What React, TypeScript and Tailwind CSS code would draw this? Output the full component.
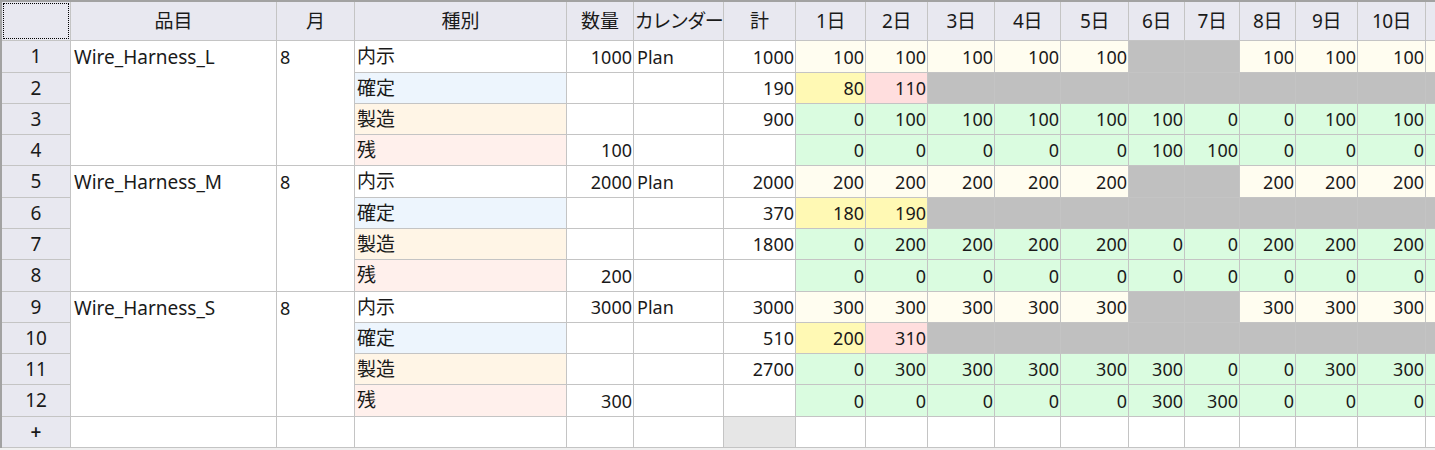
import React from "react";

type Kind = "naiji" | "kakutei" | "seizo" | "zan";

const GRAY = "bg-[#c0c0c0]";
const CREAM = "bg-[#fffdf0]";
const GREEN = "bg-[#dafce0]";
const YELLOW = "bg-[#fff9b4]";
const PINK = "bg-[#ffdede]";

const kindLabel: Record<Kind, string> = {
  naiji: "内示",
  kakutei: "確定",
  seizo: "製造",
  zan: "残",
};
const kindBg: Record<Kind, string> = {
  naiji: "bg-white",
  kakutei: "bg-[#edf5fd]",
  seizo: "bg-[#fff5e6]",
  zan: "bg-[#fff0ec]",
};

type DayCell = { v: string; bg: string };

type Row = {
  no: number;
  kind: Kind;
  qty: string;
  cal: string;
  total: string;
  days: DayCell[];
};

type Product = { name: string; month: string; rows: Row[] };

// the 11th day column is only a sliver at the right edge: colour only, no text
const naijiDays = (v: number): DayCell[] =>
  [v, v, v, v, v, null, null, v, v, v, -1].map((x) =>
    x === null ? { v: "", bg: GRAY } : { v: x < 0 ? "" : String(x), bg: CREAM }
  );

const kakuteiDays = (a: number, b: number, bYellow: boolean): DayCell[] => [
  { v: String(a), bg: YELLOW },
  { v: String(b), bg: bYellow ? YELLOW : PINK },
  ...Array.from({ length: 9 }, () => ({ v: "", bg: GRAY })),
];

const greenDays = (vals: number[]): DayCell[] => [
  ...vals.map((x) => ({ v: String(x), bg: GREEN })),
  { v: "", bg: GREEN },
];

const products: Product[] = [
  {
    name: "Wire_Harness_L",
    month: "8",
    rows: [
      { no: 1, kind: "naiji", qty: "1000", cal: "Plan", total: "1000", days: naijiDays(100) },
      { no: 2, kind: "kakutei", qty: "", cal: "", total: "190", days: kakuteiDays(80, 110, false) },
      { no: 3, kind: "seizo", qty: "", cal: "", total: "900", days: greenDays([0, 100, 100, 100, 100, 100, 0, 0, 100, 100]) },
      { no: 4, kind: "zan", qty: "100", cal: "", total: "", days: greenDays([0, 0, 0, 0, 0, 100, 100, 0, 0, 0]) },
    ],
  },
  {
    name: "Wire_Harness_M",
    month: "8",
    rows: [
      { no: 5, kind: "naiji", qty: "2000", cal: "Plan", total: "2000", days: naijiDays(200) },
      { no: 6, kind: "kakutei", qty: "", cal: "", total: "370", days: kakuteiDays(180, 190, true) },
      { no: 7, kind: "seizo", qty: "", cal: "", total: "1800", days: greenDays([0, 200, 200, 200, 200, 0, 0, 200, 200, 200]) },
      { no: 8, kind: "zan", qty: "200", cal: "", total: "", days: greenDays([0, 0, 0, 0, 0, 0, 0, 0, 0, 0]) },
    ],
  },
  {
    name: "Wire_Harness_S",
    month: "8",
    rows: [
      { no: 9, kind: "naiji", qty: "3000", cal: "Plan", total: "3000", days: naijiDays(300) },
      { no: 10, kind: "kakutei", qty: "", cal: "", total: "510", days: kakuteiDays(200, 310, false) },
      { no: 11, kind: "seizo", qty: "", cal: "", total: "2700", days: greenDays([0, 300, 300, 300, 300, 300, 0, 0, 300, 300]) },
      { no: 12, kind: "zan", qty: "300", cal: "", total: "", days: greenDays([0, 0, 0, 0, 0, 300, 300, 0, 0, 0]) },
    ],
  },
];

const dayHeaders = ["1日", "2日", "3日", "4日", "5日", "6日", "7日", "8日", "9日", "10日", ""];

const cell = "border-r border-b border-[#c4c4c4] flex items-center overflow-hidden whitespace-nowrap";
const head = `${cell} bg-[#e8e8f0] justify-center text-[19px]`;

export default function App() {
  return (
    <div className="w-[1435px] h-[450px] overflow-hidden bg-[#f0f0f0] font-['Noto_Sans','Noto_Sans_CJK_JP',sans-serif] text-[18px] text-[#1a1a1a] leading-none">
      <div className="border-l-2 border-t-2 border-[#a2a2a2] w-max">
        <div className="grid grid-cols-[69px_206px_78px_212px_67px_90px_72px_70px_62px_67px_66px_68px_56px_55px_56px_62px_68px_70px] grid-rows-[39px_32px_31px_31px_31px_32px_31px_31px_32px_31px_31px_31px_32px_31px] bg-white">
          {/* header */}
          <div className={`${head} p-[1px]`}>
            <div className="w-full h-full border border-dotted border-black" />
          </div>
          <div className={head}>品目</div>
          <div className={head}>月</div>
          <div className={head}>種別</div>
          <div className={head}>数量</div>
          <div className={`${head} tracking-[-1.5px]`}>カレンダー</div>
          <div className={head}>計</div>
          {dayHeaders.map((d, k) => (
            <div key={k} className={`${head} tracking-[-0.5px]`}>
              {d}
            </div>
          ))}

          {products.map((p) =>
            p.rows.map((r, i) => (
              <React.Fragment key={r.no}>
                <div className={head}>{r.no}</div>
                {i === 0 && (
                  <>
                    <div className={`${cell} row-span-4 items-start pt-[7px] pl-[3px] text-[19px] bg-white`}>{p.name}</div>
                    <div className={`${cell} row-span-4 items-start pt-[7px] pl-[3px] bg-white`}>{p.month}</div>
                  </>
                )}
                <div className={`${cell} ${kindBg[r.kind]} pl-[2px] text-[19px]`}>{kindLabel[r.kind]}</div>
                <div className={`${cell} bg-white justify-end pr-[1px]`}>{r.qty}</div>
                <div className={`${cell} bg-white pl-[3px]`}>{r.cal}</div>
                <div className={`${cell} bg-white justify-end pr-[1px]`}>{r.total}</div>
                {r.days.map((d, j) => (
                  <div key={j} className={`${cell} ${d.bg} justify-end pr-[1px]`}>
                    {d.v}
                  </div>
                ))}
              </React.Fragment>
            ))
          )}

          {/* add row */}
          <div className={`${head} font-semibold`}>+</div>
          <div className={`${cell} bg-white`} />
          <div className={`${cell} bg-white`} />
          <div className={`${cell} bg-white`} />
          <div className={`${cell} bg-white`} />
          <div className={`${cell} bg-white`} />
          <div className={`${cell} bg-[#e6e6e6]`} />
          {dayHeaders.map((d, k) => (
            <div key={k} className={`${cell} bg-white`} />
          ))}
        </div>
      </div>
    </div>
  );
}
